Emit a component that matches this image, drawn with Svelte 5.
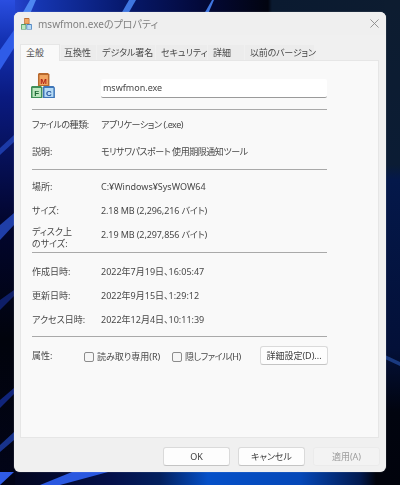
<script lang="ts">
  const tabs = [
    { label: '全般', cls: 'w40' },
    { label: '互換性', cls: 'w35' },
    { label: 'デジタル署名', cls: 'w58' },
    { label: 'セキュリティ', cls: 'w52' },
    { label: '詳細', cls: 'w36' },
    { label: '以前のバージョン', cls: 'w69' }
  ];
</script>

{#snippet blocks(cls: string)}
  <svg class={cls} viewBox="0 0 24 26" aria-hidden="true">
    <path d="M8 1h9l1.5 1.5V14H7V2z" fill="#b8692e" />
    <rect x="8.5" y="3" width="8.5" height="10" fill="#f0a561" />
    <path d="M1 14h9l1.5 1.5V26H0V15z" fill="#3f8f58" />
    <rect x="1.5" y="16" width="8.5" height="9" fill="#bde6bf" />
    <path d="M13 14h9.5l1.5 1.5V26H12V15z" fill="#3d75b8" />
    <rect x="13.5" y="16" width="9" height="9" fill="#b5daf5" />
    <text x="12.7" y="11.5" fill="#b3261a">M</text>
    <text x="5.8" y="23.8" fill="#1e6b36">F</text>
    <text x="18" y="23.8" fill="#1f4f9a">C</text>
  </svg>
{/snippet}

<div class="desktop">
  <svg class="wallpaper" viewBox="0 0 400 485" preserveAspectRatio="none" aria-hidden="true">
    <defs>
      <linearGradient id="top" x1="0" x2="1" y1="0" y2="0">
        <stop offset="0" stop-color="#2a4ee0" />
        <stop offset="0.06" stop-color="#1f3cc0" />
        <stop offset="0.1" stop-color="#1535b0" />
        <stop offset="0.3" stop-color="#071a70" />
        <stop offset="0.5" stop-color="#03093a" />
        <stop offset="0.67" stop-color="#020410" />
        <stop offset="0.68" stop-color="#0a1a30" />
        <stop offset="1" stop-color="#0d1c30" />
      </linearGradient>
      <linearGradient id="bottom" x1="0" x2="1" y1="0" y2="0">
        <stop offset="0" stop-color="#020418" />
        <stop offset="0.28" stop-color="#04104a" />
        <stop offset="0.4" stop-color="#03205e" />
        <stop offset="0.52" stop-color="#0550c8" />
        <stop offset="0.75" stop-color="#0548b8" />
        <stop offset="0.9" stop-color="#021a50" />
        <stop offset="0.94" stop-color="#01030c" />
        <stop offset="1" stop-color="#01030c" />
      </linearGradient>
      <linearGradient id="left" x1="0" x2="0" y1="0" y2="1">
        <stop offset="0" stop-color="#2a4ee0" />
        <stop offset="0.08" stop-color="#1432b4" />
        <stop offset="0.2" stop-color="#0a1a80" />
        <stop offset="0.45" stop-color="#020630" />
        <stop offset="0.7" stop-color="#01030c" />
        <stop offset="1" stop-color="#020418" />
      </linearGradient>
      <linearGradient id="right" x1="0" x2="0" y1="0" y2="1">
        <stop offset="0" stop-color="#0d1c30" />
        <stop offset="0.34" stop-color="#0b1c34" />
        <stop offset="0.37" stop-color="#04184a" />
        <stop offset="0.72" stop-color="#031038" />
        <stop offset="0.85" stop-color="#01040f" />
        <stop offset="1" stop-color="#01030c" />
      </linearGradient>
    </defs>
    <rect width="400" height="14" fill="url(#top)" />
    <rect y="470" width="400" height="15" fill="url(#bottom)" />
    <rect y="0" width="15" height="485" fill="url(#left)" />
    <rect x="385" y="0" width="15" height="485" fill="url(#right)" />
    <path d="M22 14L30 0H36L30 14z" fill="#4d86f0" />
    <path d="M121 14L129 0H136L128 14z" fill="#3f76e0" />
    <path d="M204 14L212 0H214L208 14z" fill="#3f76e0" />
    <path d="M0 50L14 30V48L0 70z" fill="#2f5ce8" />
    <path d="M0 148L14 135V142L0 155z" fill="#1c3aa8" />
    <path d="M0 225L14 213V225L0 240z" fill="#1f3ea8" />
    <path d="M0 300L14 290V296L0 310z" fill="#0e1e68" />
    <path d="M0 400L14 388V394L0 408z" fill="#10247a" />
    <path d="M0 445L14 432V440L0 452z" fill="#18338c" />
    <path d="M0 485L14 472H0z" fill="#2f5ce8" />
    <path d="M60 485L108 472H72L40 485z" fill="#2a58e0" />
    <path d="M385 355L400 362V366L385 359z" fill="#1a3a80" />
  </svg>

  <div class="window">
    <div class="titlebar">
      {@render blocks('small-icon')}
      <span class="title">mswfmon.exeのプロパティ</span>
      <svg class="close" viewBox="0 0 10 10" aria-label="閉じる">
        <path d="M0.5 0.5L9.5 9.5M9.5 0.5L0.5 9.5" />
      </svg>
    </div>

    <div class="tabs">
      {#each tabs as tab, i}
        <div class={`tab ${tab.cls}`} class:active={i === 0}>{tab.label}</div>
      {/each}
    </div>

    <div class="panel">
      <div class="head">
        {@render blocks('big-icon')}
        <div class="name">mswfmon.exe</div>
      </div>
      <hr />

      <div class="group g1">
        <div class="row"><span class="tight">ファイルの種類:</span><span class="tight">アプリケーション (.exe)</span></div>
        <div class="row"><span>説明:</span><span class="tight">モリサワパスポート 使用期限通知ツール</span></div>
      </div>
      <hr />

      <div class="group g2">
        <div class="row"><span>場所:</span><span>C:¥Windows¥SysWOW64</span></div>
        <div class="row"><span>サイズ:</span><span class="snug">2.18 MB (2,296,216 バイト)</span></div>
        <div class="row tall"><span class="two">ディスク上<br />のサイズ:</span><span class="val snug">2.19 MB (2,297,856 バイト)</span></div>
      </div>
      <hr />

      <div class="group g3">
        <div class="row"><span>作成日時:</span><span>2022年7月19日、16:05:47</span></div>
        <div class="row"><span>更新日時:</span><span>2022年9月15日、1:29:12</span></div>
        <div class="row"><span>アクセス日時:</span><span>2022年12月4日、10:11:39</span></div>
      </div>
      <hr />

      <div class="attrs">
        <span class="attr-label">属性:</span>
        <label class="check"><i></i>読み取り専用(R)</label>
        <label class="check"><i></i><span class="tight">隠しファイル(H)</span></label>
        <button type="button" class="btn adv">詳細設定(D)...</button>
      </div>
    </div>

    <div class="footer">
      <button type="button" class="btn">OK</button>
      <button type="button" class="btn">キャンセル</button>
      <button type="button" class="btn off">適用(A)</button>
    </div>
  </div>
</div>

<style>
  :global(body) {
    margin: 0;
    background: #03082a;
  }
  .desktop {
    position: relative;
    width: 400px;
    height: 485px;
    padding: 12px 14px 13px;
    box-sizing: border-box;
    overflow: hidden;
    font-family: "Noto Sans", "Noto Sans CJK JP", sans-serif;
    font-size: 9px;
    font-feature-settings: "palt";
    color: #484848;
    background: #03082a;
  }
  .wallpaper {
    position: absolute;
    inset: 0;
    width: 100%;
    height: 100%;
    filter: blur(0.7px);
  }
  .window {
    position: relative;
    display: flex;
    flex-direction: column;
    height: 460px;
    background: #f0f0f0;
    border-radius: 6px;
    box-shadow: 0 0 1px rgba(255, 255, 255, 0.7);
    overflow: hidden;
    filter: blur(0.3px);
  }
  .titlebar {
    display: flex;
    align-items: center;
    height: 23px;
    padding: 0 7px;
    margin-bottom: 9px;
    background: #efefef;
  }
  .small-icon {
    width: 11px;
    height: 13px;
  }
  .small-icon text {
    display: none;
  }
  .title {
    margin-left: 6px;
    font-size: 10px;
    color: #808080;
  }
  .close {
    margin-left: auto;
    width: 9px;
    height: 9px;
    fill: none;
    stroke: #8a8a8a;
    stroke-width: 1;
  }
  .tabs {
    display: flex;
    align-items: flex-end;
    height: 16px;
    padding-left: 6px;
    gap: 1px;
  }
  .tab {
    height: 15px;
    line-height: 15px;
    padding-left: 5px;
    box-sizing: border-box;
    background: #ececec;
    font-size: 9px;
    white-space: nowrap;
  }
  .w40 { width: 40px; }
  .w35 { width: 35px; padding-left: 3px; }
  .w58 { width: 58px; }
  .w52 { width: 51px; }
  .w36 { width: 36px; }
  .w69 { width: 69px; letter-spacing: -0.2px; }
  .tab.active {
    position: relative;
    height: 17px;
    line-height: 16px;
    background: #f9f9f9;
    border: 1px solid #e6e6e6;
    border-bottom: 0;
    margin-bottom: -1px;
  }
  .panel {
    height: 378px;
    box-sizing: border-box;
    margin: 0 7px 0 6px;
    padding: 11px 51px 0 11px;
    background: #f9f9f9;
    border: 1px solid #e6e6e6;
  }
  .head {
    display: flex;
    align-items: flex-start;
    height: 28px;
  }
  .big-icon {
    width: 24px;
    height: 26px;
    margin-left: -1px;
  }
  .big-icon text {
    font: 700 8px "Liberation Sans", sans-serif;
    text-anchor: middle;
  }
  .name {
    width: 227px;
    height: 19px;
    line-height: 18px;
    margin: 7px 0 0 46px;
    padding-left: 2px;
    box-sizing: border-box;
    background: #fff;
    border-bottom: 1px solid #9a9a9a;
    border-radius: 2px;
    font-size: 9px;
  }
  hr {
    height: 1px;
    margin: 0;
    border: 0;
    background: #a9a9a9;
  }
  .head + hr {
    margin-top: 9px;
  }
  .g1 {
    display: flex;
    flex-direction: column;
    gap: 9px;
    margin: 6px 0 8px;
  }
  .g2 {
    margin: 5px 0 0;
  }
  .g3 {
    margin: 7px 0 4px;
  }
  .row {
    display: grid;
    grid-template-columns: 69px 1fr;
    align-items: center;
    height: 24px;
    line-height: 14px;
    white-space: nowrap;
  }
  .g1 .row {
    height: 18px;
  }
  .row.tall {
    height: 29px;
    align-items: start;
  }
  .two {
    padding-top: 3px;
    line-height: 12px;
  }
  .val {
    line-height: 24px;
  }
  .tight {
    letter-spacing: -0.45px;
  }
  .snug {
    letter-spacing: -0.1px;
  }
  .attrs {
    display: flex;
    align-items: center;
    margin-top: 9px;
    height: 19px;
  }
  .attr-label {
    width: 52px;
  }
  .check {
    display: flex;
    align-items: center;
    width: 88px;
    margin-top: 2px;
  }
  .check i {
    width: 10px;
    height: 10px;
    margin-right: 3px;
    background: #f6f6f6;
    border: 1px solid #8c8c8c;
    border-radius: 2px;
    box-sizing: border-box;
  }
  .btn {
    width: 67px;
    height: 19px;
    padding: 0;
    font: inherit;
    font-feature-settings: "palt";
    color: #3c3c3c;
    background: #fdfdfd;
    border: 1px solid #dadada;
    border-bottom-color: #c4c4c4;
    border-radius: 3px;
  }
  .adv {
    margin-left: auto;
    width: 68px;
    margin-right: -1px;
  }
  .footer {
    display: flex;
    justify-content: flex-end;
    gap: 8px;
    padding: 9px 6px 0 0;
  }
  .btn.off {
    color: #9c9c9c;
    background: #f3f3f3;
    border-color: #ebebeb;
  }
</style>
